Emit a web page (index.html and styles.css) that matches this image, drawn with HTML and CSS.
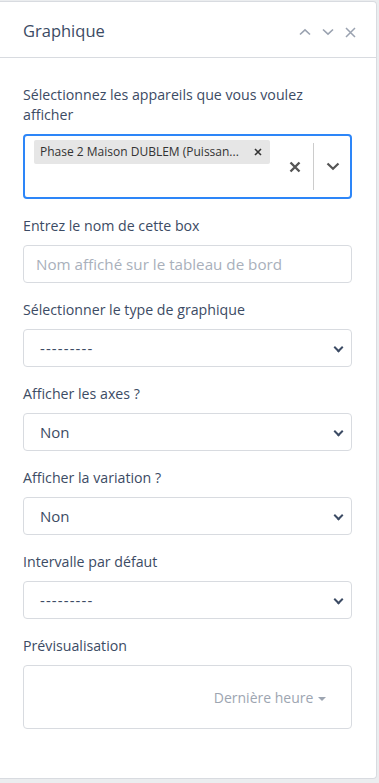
FILE: index.html
```html
<!DOCTYPE html>
<html lang="fr">
<head>
<meta charset="utf-8">
<title>Graphique</title>
<link rel="stylesheet" href="styles.css">
</head>
<body>

<div class="card">
  <div class="card-header">
    <span class="card-title">Graphique</span>
    <span class="card-actions">
      <svg width="12" height="8" viewBox="0 0 12 8"><path d="M1 6.5 L6 1.8 L11 6.5" fill="none" stroke="#9aa2b0" stroke-width="1.6"/></svg>
      <svg width="12" height="8" viewBox="0 0 12 8"><path d="M1 1.5 L6 6.2 L11 1.5" fill="none" stroke="#9aa2b0" stroke-width="1.6"/></svg>
      <svg width="11" height="11" viewBox="0 0 11 11"><path d="M1 1 L10 10 M10 1 L1 10" fill="none" stroke="#9aa2b0" stroke-width="1.5"/></svg>
    </span>
  </div>

  <div class="card-body">
    <div class="form-group">
      <label class="form-label">Sélectionnez les appareils que vous voulez afficher</label>
      <div class="multi-select">
        <div class="multi-values">
          <span class="tag">
            <span class="tag-text">Phase 2 Maison DUBLEM (Puissan...</span>
            <svg class="tag-remove" width="8" height="8" viewBox="0 0 8 8"><path d="M1 1 L7 7 M7 1 L1 7" stroke="#333" stroke-width="1.6"/></svg>
          </span>
        </div>
        <div class="multi-indicators">
          <svg class="clear" width="12" height="12" viewBox="0 0 12 12"><path d="M1.5 1.5 L10.5 10.5 M10.5 1.5 L1.5 10.5" stroke="#555" stroke-width="2.4"/></svg>
          <span class="separator"></span>
          <svg class="dropdown" width="14" height="9" viewBox="0 0 14 9"><path d="M1.5 1.5 L7 6.8 L12.5 1.5" fill="none" stroke="#555" stroke-width="2.2"/></svg>
        </div>
      </div>
    </div>

    <div class="form-group">
      <label class="form-label">Entrez le nom de cette box</label>
      <input class="form-control" type="text" placeholder="Nom affiché sur le tableau de bord">
    </div>

    <div class="form-group">
      <label class="form-label">Sélectionner le type de graphique</label>
      <div class="form-select"><span class="empty">---------</span></div>
    </div>

    <div class="form-group">
      <label class="form-label">Afficher les axes ?</label>
      <div class="form-select">Non</div>
    </div>

    <div class="form-group">
      <label class="form-label">Afficher la variation ?</label>
      <div class="form-select">Non</div>
    </div>

    <div class="form-group">
      <label class="form-label">Intervalle par défaut</label>
      <div class="form-select"><span class="empty">---------</span></div>
    </div>

    <div class="form-group last">
      <label class="form-label">Prévisualisation</label>
      <div class="preview">
        <span class="range">Dernière heure <span class="caret"></span></span>
      </div>
    </div>
  </div>
</div>

</body>
</html>
```

FILE: styles.css
```css
body {
	margin: 0;
	background: #ebedef;
	font-family: "Open Sans", "Noto Sans", sans-serif;
	color: #3c4b64;
}
.card {
	width: 376px;
	height: 776px;
	margin-top: 1px;
	background: #fff;
	border: 1px solid #d8dbe0;
	border-left: 0;
	border-radius: 0 4px 4px 0;
}
.card-header {
	height: 55px;
	padding: 0 20px 0 23px;
	display: flex;
	align-items: center;
	justify-content: space-between;
	border-bottom: 1px solid #d8dbe0;
}
.card-title {
	font-size: 16.5px;
	padding-top: 1px;
}
.card-actions {
	display: flex;
	align-items: center;
	gap: 11px;
	padding-top: 5px;
}
.card-body {
	padding: 27px 24px 0 23px;
}
.form-group {
	margin-bottom: 17px;
}
.form-label {
	display: block;
	font-size: 14.2px;
	line-height: 20px;
	margin-bottom: 9px;
}
.multi-select {
	box-sizing: border-box;
	height: 65px;
	border: 2px solid #2d86f8;
	border-radius: 4px;
	display: flex;
}
.multi-values {
	flex: 1;
	padding: 3px 9px;
}
.tag {
	display: inline-flex;
	align-items: center;
	height: 24px;
	background: #e6e6e6;
	border-radius: 2px;
	padding: 0 8px 0 6px;
	font-size: 12px;
	color: #333;
}
.tag-text {
	margin-right: 15px;
}
.multi-indicators {
	display: flex;
	align-items: center;
}
.clear {
	margin: 0 12px 0 8px;
}
.separator {
	width: 1px;
	align-self: stretch;
	margin: 7px 0;
	background: #ccc;
}
.dropdown {
	margin: 0 10px 0 12px;
}
.form-control,
.form-select {
	box-sizing: border-box;
	display: block;
	width: 100%;
	height: 38px;
	padding: 0 16px;
	border: 1px solid #d8dbe0;
	border-radius: 4px;
	font-family: inherit;
	font-size: 15px;
	line-height: 36px;
	color: #3c4b64;
	background: #fff;
}
.form-control {
	padding: 0 12px;
	font-size: 15.2px;
}
.form-control::placeholder {
	color: #a9b0bb;
}
.form-select {
	position: relative;
}
.form-select::after {
	content: "";
	position: absolute;
	right: 9px;
	top: 14px;
	width: 5px;
	height: 5px;
	border-right: 2px solid #3c4b64;
	border-bottom: 2px solid #3c4b64;
	transform: rotate(45deg);
}
.empty {
	letter-spacing: 1.1px;
}
.preview {
	box-sizing: border-box;
	height: 64px;
	border: 1px solid #d8dbe0;
	border-radius: 4px;
	display: flex;
	align-items: center;
	justify-content: flex-end;
	padding-right: 25px;
}
.range {
	font-size: 14px;
	color: #9da5b1;
}
.caret {
	display: inline-block;
	vertical-align: middle;
	border-top: 4px solid #9da5b1;
	border-left: 4px solid transparent;
	border-right: 4px solid transparent;
	margin-left: 1px;
}
```
